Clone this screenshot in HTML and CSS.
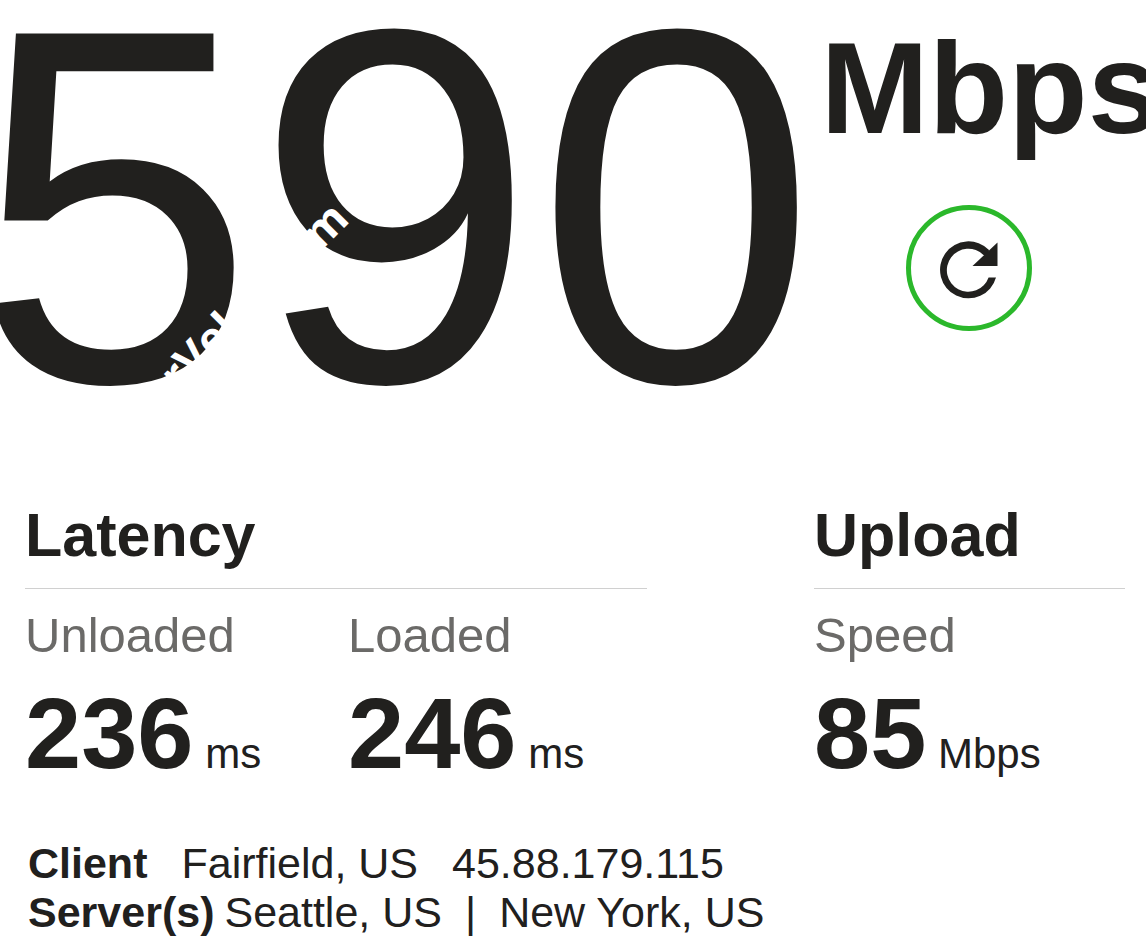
FILE: index.html
```html
<!DOCTYPE html>
<html lang="en">
<head>
    <meta charset="utf-8">
    <title>Internet Speed Test</title>
    <link rel="stylesheet" href="styles.css">
</head>
<body>
    <main class="results">
        <section class="speed">
            <div class="speed-value">590
                <span class="mark mark-start">rVel</span>
                <span class="mark mark-end">m</span>
            </div>
            <div class="speed-side">
                <div class="speed-units">Mbps</div>
                <button class="restart" type="button" aria-label="Restart test">
                    <svg class="restart-icon" viewBox="-1 -4 60 62">
                        <path d="M56 36.500A28.500 28.500 0 1 1 49 9L48 15L43.500 14A21.500 21.500 0 1 0 48.600 36.500Z" fill="currentColor"/>
                        <path d="M57.500 1.500V25H32.500Z" fill="currentColor"/>
                    </svg>
                </button>
            </div>
        </section>

        <section class="details">
            <div class="group">
                <h2>Latency</h2>
                <div class="stats stats-two">
                    <div class="stat">
                        <div class="label">Unloaded</div>
                        <div class="value"><strong>236</strong> ms</div>
                    </div>
                    <div class="stat">
                        <div class="label">Loaded</div>
                        <div class="value"><strong>246</strong> ms</div>
                    </div>
                </div>
            </div>
            <div class="group">
                <h2>Upload</h2>
                <div class="stats">
                    <div class="stat">
                        <div class="label">Speed</div>
                        <div class="value"><strong>85</strong> Mbps</div>
                    </div>
                </div>
            </div>
        </section>

        <footer class="connection">
            <div class="row client">
                <strong>Client</strong>
                <span>Fairfield, US</span>
                <span>45.88.179.115</span>
            </div>
            <div class="row server">
                <strong>Server(s)</strong>
                <span>Seattle, US</span>
                <span class="divider">|</span>
                <span>New York, US</span>
            </div>
        </footer>
    </main>
</body>
</html>
```
FILE: styles.css
```css
body {
    margin: 0;
    background: #ffffff;
    color: #21201e;
    font-family: Arial, "Liberation Sans", sans-serif;
}

.results {
    overflow: hidden;
}

.speed {
    display: flex;
    align-items: flex-start;
    gap: 4px;
    margin-left: -26px;
}

.speed-value {
    position: relative;
    flex: none;
    font-size: 505px;
    line-height: 413px;
}

.speed-side {
    flex: none;
    display: flex;
    flex-direction: column;
    align-items: center;
    padding-top: 14px;
}

.speed-units {
    font-size: 130px;
    font-weight: bold;
    line-height: 148px;
}

/* diagonal overlay on the digits */
.mark {
    position: absolute;
    color: #ffffff;
    font-family: "Open Sans", sans-serif;
    font-size: 44px;
    font-weight: bold;
    line-height: 44px;
    transform: rotate(-45deg);
    transform-origin: left bottom;
}

.mark-start {
    left: 208px;
    top: 353px;
}

.mark-end {
    left: 350px;
    top: 211px;
}

.restart {
    display: flex;
    align-items: center;
    justify-content: center;
    width: 126px;
    height: 126px;
    margin-top: 43px;
    margin-right: 43px;
    padding: 0;
    border: 5px solid #2bb82b;
    border-radius: 50%;
    background: none;
    color: #21201e;
    cursor: pointer;
}

.restart-icon {
    width: 60px;
    height: 62px;
}

.details {
    display: grid;
    grid-template-columns: 2fr 1fr;
    gap: 167px;
    padding: 87px 21px 0 25px;
}

h2 {
    margin: 0;
    padding-bottom: 18px;
    border-bottom: 1px solid #d0d0d0;
    font-size: 61px;
    line-height: 70px;
}

.stats {
    display: grid;
    gap: 24px;
    padding-top: 18px;
}

.stats-two {
    grid-template-columns: 1fr 1fr;
}

.label {
    color: #6b6a68;
    font-size: 49px;
    line-height: 56px;
}

.value {
    font-size: 42px;
    line-height: 116px;
    margin-top: 12px;
    white-space: nowrap;
}

.value strong {
    font-size: 101px;
}

.connection {
    padding: 27px 28px 0;
    font-size: 43px;
    line-height: 49px;
}

.row {
    display: flex;
}

.client {
    gap: 34px;
}

.server {
    gap: 10px;
}

.divider {
    margin: 0 13px;
}
```
